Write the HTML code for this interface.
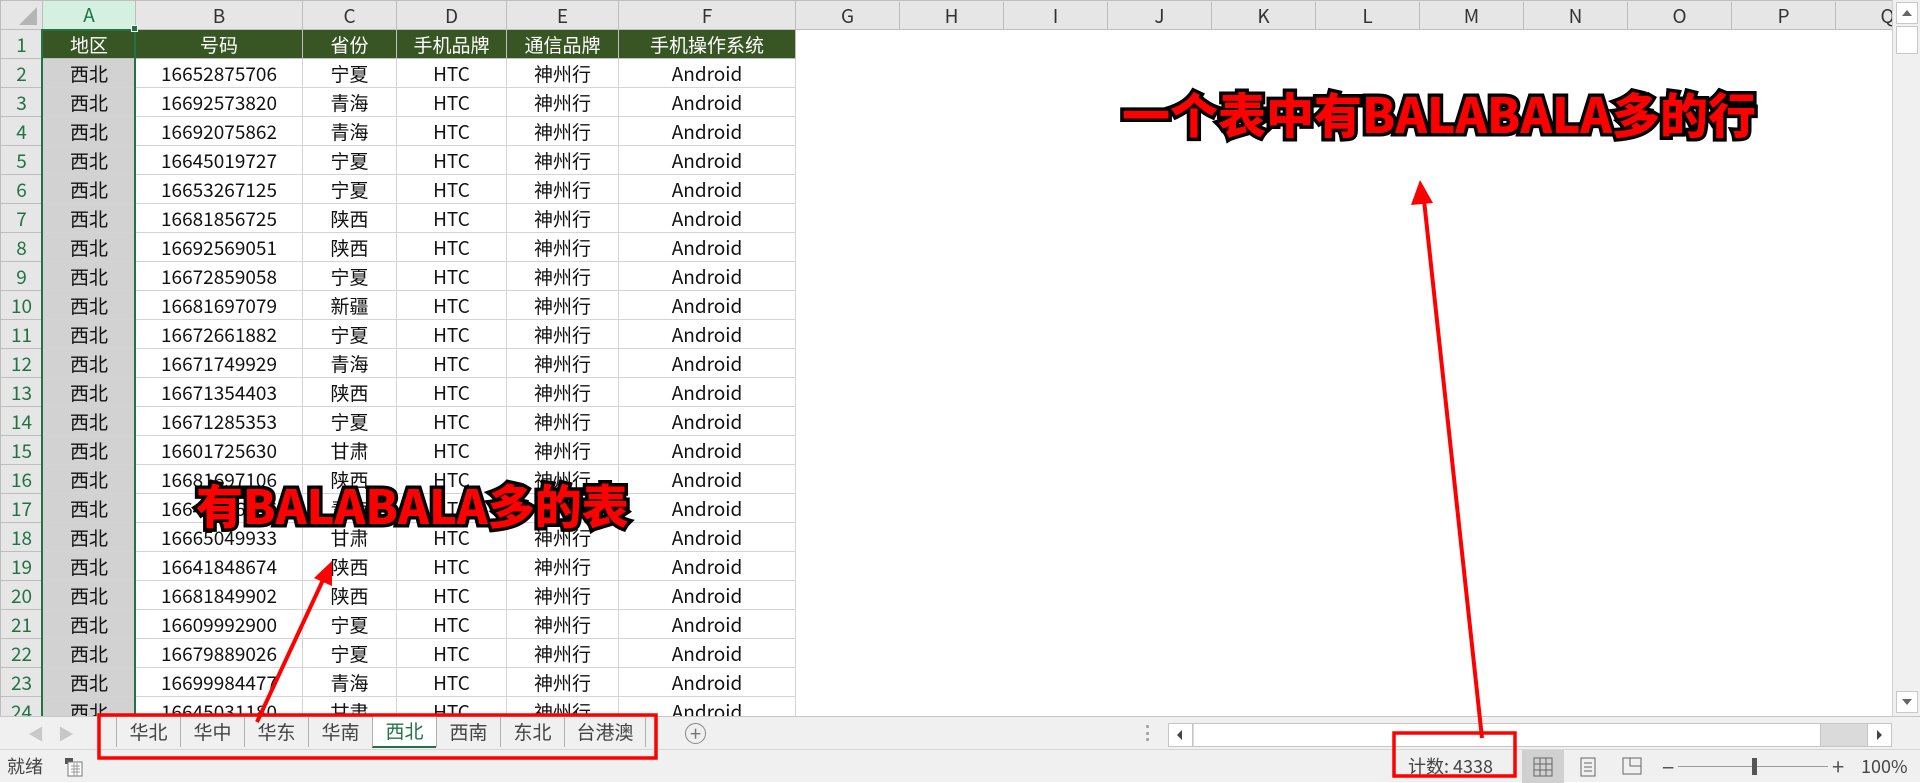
<!DOCTYPE html>
<html><head><meta charset="utf-8"><style>
*{box-sizing:border-box;margin:0;padding:0}
body{width:1920px;height:782px;overflow:hidden;background:#fff;font-family:"Noto Sans CJK SC","Liberation Sans",sans-serif;position:relative}
#grid{position:absolute;left:0;top:0;width:1892px;height:716px;overflow:hidden}
table{border-collapse:collapse;table-layout:fixed;position:absolute;left:0;top:0;width:1995px}
td{height:29px;border:1px solid #d4d4d4;text-align:center;font-size:19px;line-height:27px;color:#111;white-space:nowrap;overflow:hidden;padding:0;font-family:"Noto Sans CJK SC",sans-serif}
td.e{border-color:#fff}
tr.h td{background:#e6e6e6;border-color:#bdbdbd;color:#333;font-size:19px;height:29px}
td.rn{background:#e6e6e6;border-color:#bdbdbd;color:#217346;font-size:19px;text-align:center}
tr.h td.sel{background:#d3f0e0;color:#217346;border-bottom:2px solid #217346}
td.g{background:#375623;color:#fff;border-color:#c0c0c0}
td.a{background:#d2d2d2}
#vs{position:absolute;left:1892px;top:0;width:28px;height:716px;background:#f0f0f0;border-left:1px solid #d0d0d0}
#tabs{position:absolute;left:0;top:716px;width:1920px;height:33px;background:#f0f0f0;border-top:1px solid #c6c6c6}
#status{position:absolute;left:0;top:749px;width:1920px;height:33px;background:#f0f0f0;border-top:1px solid #d6d6d6;font-size:18px;color:#444}
.tab{position:absolute;top:0;height:30px;line-height:29px;font-size:19px;color:#444;text-align:center;border-left:1px solid #b0b0b0;}
.ann{position:absolute;font-family:"Noto Sans CJK SC",sans-serif;font-weight:900;color:#f00;-webkit-text-stroke:7px #000;paint-order:stroke fill;white-space:nowrap;line-height:1}
</style></head><body>
<div id="grid">
<table>
<colgroup><col style="width:42px"><col style="width:93px"><col style="width:167px"><col style="width:94px"><col style="width:110px"><col style="width:112px"><col style="width:177px"><col style="width:1200px"></colgroup>
<tr class="h"><td style="background:#e6e6e6"><svg width="30" height="24" style="display:block;margin-left:8px"><polygon points="28,4 28,22 10,22" fill="#b5b5b5"/></svg></td><td class="sel">A</td><td>B</td><td>C</td><td>D</td><td>E</td><td>F</td><td style="padding:0"><div style="display:flex;font-size:19px">
<span style="width:104px;flex:none;border-right:1px solid #bdbdbd">G</span><span style="width:104px;flex:none;border-right:1px solid #bdbdbd">H</span><span style="width:104px;flex:none;border-right:1px solid #bdbdbd">I</span><span style="width:104px;flex:none;border-right:1px solid #bdbdbd">J</span><span style="width:104px;flex:none;border-right:1px solid #bdbdbd">K</span><span style="width:104px;flex:none;border-right:1px solid #bdbdbd">L</span><span style="width:104px;flex:none;border-right:1px solid #bdbdbd">M</span><span style="width:104px;flex:none;border-right:1px solid #bdbdbd">N</span><span style="width:104px;flex:none;border-right:1px solid #bdbdbd">O</span><span style="width:104px;flex:none;border-right:1px solid #bdbdbd">P</span><span style="width:104px;flex:none;border-right:1px solid #bdbdbd">Q</span></div></td></tr>
<tr><td class="rn">1</td><td class="g">地区</td><td class="g">号码</td><td class="g">省份</td><td class="g">手机品牌</td><td class="g">通信品牌</td><td class="g">手机操作系统</td><td class="e"></td></tr>
<tr><td class="rn">2</td><td class="a">西北</td><td>16652875706</td><td>宁夏</td><td>HTC</td><td>神州行</td><td>Android</td><td class="e"></td></tr>
<tr><td class="rn">3</td><td class="a">西北</td><td>16692573820</td><td>青海</td><td>HTC</td><td>神州行</td><td>Android</td><td class="e"></td></tr>
<tr><td class="rn">4</td><td class="a">西北</td><td>16692075862</td><td>青海</td><td>HTC</td><td>神州行</td><td>Android</td><td class="e"></td></tr>
<tr><td class="rn">5</td><td class="a">西北</td><td>16645019727</td><td>宁夏</td><td>HTC</td><td>神州行</td><td>Android</td><td class="e"></td></tr>
<tr><td class="rn">6</td><td class="a">西北</td><td>16653267125</td><td>宁夏</td><td>HTC</td><td>神州行</td><td>Android</td><td class="e"></td></tr>
<tr><td class="rn">7</td><td class="a">西北</td><td>16681856725</td><td>陕西</td><td>HTC</td><td>神州行</td><td>Android</td><td class="e"></td></tr>
<tr><td class="rn">8</td><td class="a">西北</td><td>16692569051</td><td>陕西</td><td>HTC</td><td>神州行</td><td>Android</td><td class="e"></td></tr>
<tr><td class="rn">9</td><td class="a">西北</td><td>16672859058</td><td>宁夏</td><td>HTC</td><td>神州行</td><td>Android</td><td class="e"></td></tr>
<tr><td class="rn">10</td><td class="a">西北</td><td>16681697079</td><td>新疆</td><td>HTC</td><td>神州行</td><td>Android</td><td class="e"></td></tr>
<tr><td class="rn">11</td><td class="a">西北</td><td>16672661882</td><td>宁夏</td><td>HTC</td><td>神州行</td><td>Android</td><td class="e"></td></tr>
<tr><td class="rn">12</td><td class="a">西北</td><td>16671749929</td><td>青海</td><td>HTC</td><td>神州行</td><td>Android</td><td class="e"></td></tr>
<tr><td class="rn">13</td><td class="a">西北</td><td>16671354403</td><td>陕西</td><td>HTC</td><td>神州行</td><td>Android</td><td class="e"></td></tr>
<tr><td class="rn">14</td><td class="a">西北</td><td>16671285353</td><td>宁夏</td><td>HTC</td><td>神州行</td><td>Android</td><td class="e"></td></tr>
<tr><td class="rn">15</td><td class="a">西北</td><td>16601725630</td><td>甘肃</td><td>HTC</td><td>神州行</td><td>Android</td><td class="e"></td></tr>
<tr><td class="rn">16</td><td class="a">西北</td><td>16681697106</td><td>陕西</td><td>HTC</td><td>神州行</td><td>Android</td><td class="e"></td></tr>
<tr><td class="rn">17</td><td class="a">西北</td><td>16641256836</td><td>青海</td><td>HTC</td><td>神州行</td><td>Android</td><td class="e"></td></tr>
<tr><td class="rn">18</td><td class="a">西北</td><td>16665049933</td><td>甘肃</td><td>HTC</td><td>神州行</td><td>Android</td><td class="e"></td></tr>
<tr><td class="rn">19</td><td class="a">西北</td><td>16641848674</td><td>陕西</td><td>HTC</td><td>神州行</td><td>Android</td><td class="e"></td></tr>
<tr><td class="rn">20</td><td class="a">西北</td><td>16681849902</td><td>陕西</td><td>HTC</td><td>神州行</td><td>Android</td><td class="e"></td></tr>
<tr><td class="rn">21</td><td class="a">西北</td><td>16609992900</td><td>宁夏</td><td>HTC</td><td>神州行</td><td>Android</td><td class="e"></td></tr>
<tr><td class="rn">22</td><td class="a">西北</td><td>16679889026</td><td>宁夏</td><td>HTC</td><td>神州行</td><td>Android</td><td class="e"></td></tr>
<tr><td class="rn">23</td><td class="a">西北</td><td>16699984477</td><td>青海</td><td>HTC</td><td>神州行</td><td>Android</td><td class="e"></td></tr>
<tr><td class="rn">24</td><td class="a">西北</td><td>16645031180</td><td>甘肃</td><td>HTC</td><td>神州行</td><td>Android</td><td class="e"></td></tr>
</table>
<div style="position:absolute;left:41px;top:29px;width:95px;height:700px;border:2px solid #217346"></div>
<div style="position:absolute;left:131px;top:25px;width:7px;height:7px;background:#217346;border:1px solid #fff"></div>
</div>
<div id="vs">
<div style="position:absolute;left:3px;top:2px;width:22px;height:22px;background:#fff;border:1px solid #c8c8c8"><svg width="20" height="20"><polygon points="5,13 15,13 10,7" fill="#666"/></svg></div>
<div style="position:absolute;left:3px;top:26px;width:22px;height:28px;background:#fff;border:1px solid #c8c8c8"></div>
<div style="position:absolute;left:3px;top:691px;width:22px;height:22px;background:#fff;border:1px solid #c8c8c8"><svg width="20" height="20"><polygon points="5,7 15,7 10,13" fill="#666"/></svg></div>
</div>
<div id="tabs">
<span style="position:absolute;left:28px;top:4px;color:#c8c8c8;font-size:16px">◀</span>
<span style="position:absolute;left:58px;top:4px;color:#c8c8c8;font-size:16px">▶</span>
<div class="tab" style="left:116px;width:64px">华北</div>
<div class="tab" style="left:180px;width:64px">华中</div>
<div class="tab" style="left:244px;width:64px">华东</div>
<div class="tab" style="left:308px;width:64px">华南</div>
<div class="tab" style="left:372px;width:64px;background:#fff;color:#217346;border-bottom:2px solid #217346;top:-1px;height:32px">西北</div>
<div class="tab" style="left:436px;width:64px">西南</div>
<div class="tab" style="left:500px;width:64px">东北</div>
<div class="tab" style="left:564px;width:82px;border-right:1px solid #b0b0b0">台港澳</div>
<div style="position:absolute;left:685px;top:6px;width:21px;height:21px;border:1.5px solid #888;border-radius:50%;text-align:center;line-height:17px;color:#777;font-size:20px">+</div>
<div style="position:absolute;left:1146px;top:8px;width:3px;height:16px;border-left:3px dotted #aaa"></div>
<div style="position:absolute;left:1168px;top:6px;width:724px;height:24px;background:#dadada;border:1px solid #c6c6c6">
<div style="position:absolute;left:0;top:0;width:24px;height:22px;background:#fff;border-right:1px solid #c6c6c6"><svg width="22" height="22"><polygon points="13,6 13,16 8,11" fill="#444"/></svg></div>
<div style="position:absolute;left:25px;top:0;width:627px;height:22px;background:#fff;border-right:1px solid #c6c6c6"></div>
<div style="position:absolute;right:0;top:0;width:24px;height:22px;background:#fff;border-left:1px solid #c6c6c6"><svg width="22" height="22"><polygon points="9,6 9,16 14,11" fill="#444"/></svg></div>
</div>
</div>
<div id="status">
<span style="position:absolute;left:7px;top:3px">就绪</span>
<svg style="position:absolute;left:64px;top:7px" width="20" height="20"><rect x="1" y="1" width="8" height="6" fill="#555"/><rect x="4" y="5" width="14" height="14" fill="#fff" stroke="#777"/><path d="M7 9h9M7 12h9M7 15h9M10 6v13M13 6v13" stroke="#999"/></svg>
<span style="position:absolute;left:1408px;top:3px">计数: 4338</span>
<div style="position:absolute;left:1522px;top:0;width:42px;height:33px;background:#d0d0d0"></div>
<svg style="position:absolute;left:1533px;top:7px" width="20" height="20"><rect x="1" y="1" width="18" height="18" fill="none" stroke="#666"/><path d="M7 1v18M13 1v18M1 7h18M1 13h18" stroke="#666"/></svg>
<svg style="position:absolute;left:1578px;top:7px" width="20" height="20"><rect x="3" y="1" width="14" height="18" fill="none" stroke="#666"/><path d="M6 6h8M6 10h8M6 14h8" stroke="#666"/></svg>
<svg style="position:absolute;left:1622px;top:7px" width="20" height="20"><rect x="1" y="1" width="18" height="16" fill="none" stroke="#666"/><path d="M8 1v8h11" stroke="#666" fill="none"/></svg>
<span style="position:absolute;left:1662px;top:1px;font-size:22px;color:#555">−</span>
<div style="position:absolute;left:1678px;top:16px;width:150px;height:1px;background:#999"></div>
<div style="position:absolute;left:1752px;top:8px;width:5px;height:17px;background:#555"></div>
<span style="position:absolute;left:1832px;top:0px;font-size:22px;color:#555">+</span>
<span style="position:absolute;left:1861px;top:3px">100%</span>
</div>
<div class="ann" style="left:1122px;top:88px;font-size:48px">一个表中有BALABALA多的行</div>
<div class="ann" style="left:196px;top:480px;font-size:47px">有BALABALA多的表</div>
<svg style="position:absolute;left:0;top:0" width="1920" height="782">
<line x1="1482" y1="738" x2="1424" y2="200" stroke="#f00" stroke-width="4"/>
<polygon points="1420,180 1411,205 1433,203" fill="#f00"/>
<line x1="257" y1="722" x2="323" y2="580" stroke="#f00" stroke-width="4"/>
<polygon points="332,561 314,578 332,586" fill="#f00"/>
<rect x="99" y="715" width="557" height="43" fill="none" stroke="#f00" stroke-width="3.5"/>
<rect x="1394" y="733" width="121" height="43" fill="none" stroke="#f00" stroke-width="3.5"/>
</svg>
</body></html>
